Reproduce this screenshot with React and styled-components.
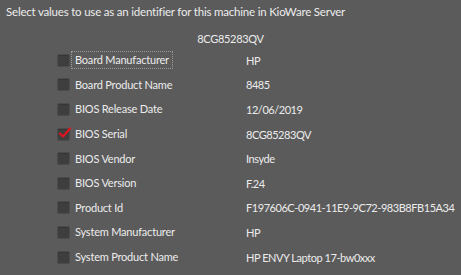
import React from "react";
import styled, { createGlobalStyle } from "styled-components";

const Global = createGlobalStyle`
  html, body { margin: 0; padding: 0; background: #5b5b5b; }
  body { font-family: "Lato", "Open Sans", sans-serif; }
`;

const Page = styled.div`
  width: 461px;
  height: 275px;
  background: #5b5b5b;
  color: #ececec;
  font-size: 11.5px;
  letter-spacing: -0.2px;
  box-sizing: border-box;
  padding: 4px 0 0 6px;
  overflow: hidden;
`;

const Title = styled.div`
  line-height: 16px;
`;

const Serial = styled.div`
  text-align: center;
  margin-top: 11px;
  padding-right: 6px;
  line-height: 16px;
  font-size: 11px;
  letter-spacing: -0.3px;
`;

const List = styled.div`
  display: grid;
  grid-auto-rows: 24.6px;
  margin-top: 1px;
  font-size: 11px;
`;

const Row = styled.div`
  display: flex;
  align-items: center;
  padding-left: 51px;
`;

const Box = styled.span`
  flex: none;
  width: 11px;
  height: 11px;
  border-radius: 2px;
  background: #3e3e3e;
  border: 1px solid #4b4b4b;
  box-shadow: inset 0 1px 0 #363636;
  position: relative;
  margin-right: 2px;
`;

const Check = styled.svg`
  position: absolute;
  left: 0px;
  top: -2px;
`;

const LabelCell = styled.span`
  flex: none;
  width: 174px;
  display: flex;
`;

const Label = styled.span`
  padding: 0 3px 1px 3px;
  line-height: 15px;
  outline: ${(p) => (p.$focus ? "1px dotted #9a9a9a" : "none")};
`;

const Value = styled.span`
  white-space: nowrap;
  letter-spacing: -0.45px;
`;

const rows = [
  ["Board Manufacturer", "HP", false, true],
  ["Board Product Name", "8485"],
  ["BIOS Release Date", "12/06/2019"],
  ["BIOS Serial", "8CG85283QV", true],
  ["BIOS Vendor", "Insyde"],
  ["BIOS Version", "F.24"],
  ["Product Id", "F197606C-0941-11E9-9C72-983B8FB15A34"],
  ["System Manufacturer", "HP"],
  ["System Product Name", "HP ENVY Laptop 17-bw0xxx"],
];

export default function App() {
  return (
    <>
      <Global />
      <Page>
        <Title>Select values to use as an identifier for this machine in KioWare Server</Title>
        <Serial>8CG85283QV</Serial>
        <List>
          {rows.map(([label, value, checked, focus]) => (
            <Row key={label}>
              <Box>
                {checked && (
                  <Check width="14" height="12" viewBox="0 0 14 12">
                    <path d="M2 6.5 L5 9.5 L12 1.5" stroke="#e0141e" strokeWidth="2.2" fill="none" strokeLinecap="round" strokeLinejoin="round" />
                  </Check>
                )}
              </Box>
              <LabelCell>
                <Label $focus={focus}>{label}</Label>
              </LabelCell>
              <Value>{value}</Value>
            </Row>
          ))}
        </List>
      </Page>
    </>
  );
}
